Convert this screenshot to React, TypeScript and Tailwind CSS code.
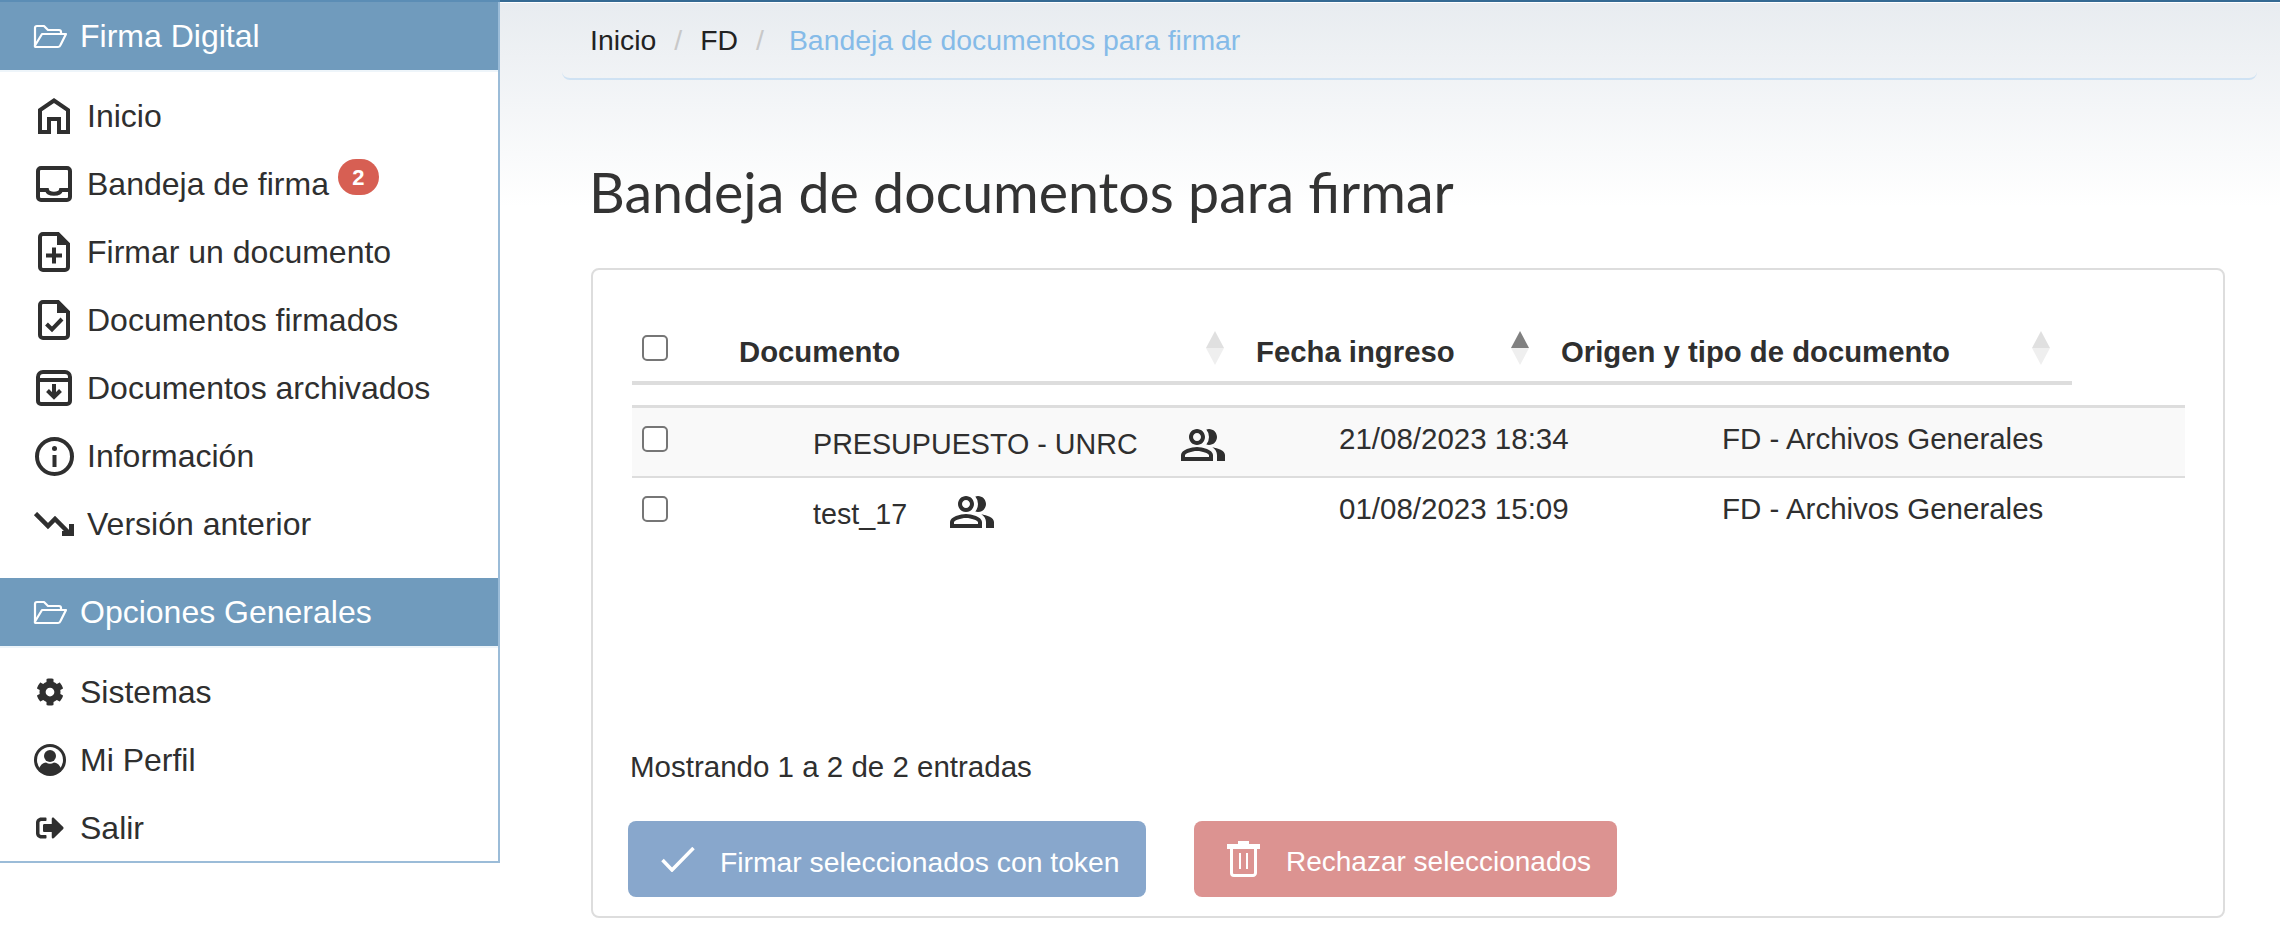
import React from "react";
import { FaCog, FaSignOutAlt } from "react-icons/fa";
import { MdOutlinePeopleAlt } from "react-icons/md";

const HomeIcon = () => (
  <svg width="32" height="36" viewBox="0 0 32 36" fill="none" stroke="currentColor" strokeWidth="4">
    <path d="M2 34V12L16 2.5 30 12V34H21V21H11V34Z" />
  </svg>
);

const InboxIcon = () => (
  <svg width="36" height="36" viewBox="0 0 36 36" fill="none" stroke="currentColor" strokeWidth="4">
    <rect x="2" y="2" width="32" height="32" rx="3" />
    <path d="M2 24H11C12 29 24 29 25 24H34" />
  </svg>
);

const FileBase = ({ children }: { children: React.ReactNode }) => (
  <svg width="32" height="40" viewBox="0 0 32 40" fill="none" stroke="currentColor" strokeWidth="4">
    <path d="M2 5a3 3 0 0 1 3-3H20L30 12V35a3 3 0 0 1-3 3H5a3 3 0 0 1-3-3Z" />
    <path d="M20 2V12H30Z" fill="currentColor" strokeWidth="2" />
    {children}
  </svg>
);

const ArchiveIcon = () => (
  <svg width="36" height="36" viewBox="0 0 36 36" fill="none" stroke="currentColor" strokeWidth="4">
    <path d="M2 10V7a5 5 0 0 1 5-5H29a5 5 0 0 1 5 5V31a3 3 0 0 1-3 3H5a3 3 0 0 1-3-3Z" />
    <path d="M2 10H34" />
    <path d="M18 14V26M11.5 20.5 18 27l6.5-6.5" />
  </svg>
);

const InfoIcon = () => (
  <svg width="39" height="39" viewBox="0 0 39 39" fill="none">
    <circle cx="19.5" cy="19.5" r="17.5" stroke="currentColor" strokeWidth="4" />
    <circle cx="19.5" cy="11.5" r="2.5" fill="currentColor" />
    <rect x="17.5" y="18" width="4" height="12" fill="currentColor" />
  </svg>
);

const TrendIcon = () => (
  <svg width="40" height="24" viewBox="0 0 40 24" fill="none" stroke="currentColor">
    <path d="M1.5 1.5 14 14l7-7L36 22" strokeWidth="4.5" />
    <path d="M28 21.5H37.5V12" strokeWidth="5" />
  </svg>
);

const FolderIcon = () => (
  <svg width="35" height="25" viewBox="0 0 35 25" fill="none" stroke="currentColor" strokeWidth="2.2" strokeLinejoin="round">
    <path d="M2 22V4a2 2 0 0 1 2-2H11l4 4H26a2 2 0 0 1 2 2V10" />
    <path d="M9 10H33L27.5 21a3 3 0 0 1-2.5 2H3a1 1 0 0 1-1-1.5Z" />
  </svg>
);

const ProfileIcon = () => (
  <svg width="32" height="32" viewBox="0 0 32 32">
    <circle cx="16" cy="16" r="16" fill="currentColor" />
    <circle cx="16" cy="16" r="13" fill="#fff" />
    <circle cx="16" cy="12" r="6" fill="currentColor" />
    <path d="M5 26Q6 19 12 18.500 16 21 20 18.500 26 19 27 26 16 35 5 26Z" fill="currentColor" />
  </svg>
);

const CheckIcon = () => (
  <svg width="34" height="25" viewBox="0 0 34 25" fill="none" stroke="currentColor" strokeWidth="3.5">
    <path d="M1.500 13 11 23 32.500 1" />
  </svg>
);

const TrashIcon = () => (
  <svg width="33" height="36" viewBox="0 0 33 36" fill="none" stroke="currentColor">
    <path d="M11 1.500H22" strokeWidth="3" />
    <path d="M0 5.500H33" strokeWidth="5" />
    <path d="M4.500 7V32a2.500 2.500 0 0 0 2.500 2.500H26a2.500 2.500 0 0 0 2.500-2.500V7" strokeWidth="3" />
    <path d="M13 12V28M20 12V28" strokeWidth="2" />
  </svg>
);

const topItems = [
  { label: "Inicio", icon: <HomeIcon /> },
  { label: "Bandeja de firma", icon: <InboxIcon />, badge: "2" },
  {
    label: "Firmar un documento",
    icon: (
      <FileBase>
        <path d="M8 23.500H24M16 15.500V31.500" />
      </FileBase>
    ),
  },
  {
    label: "Documentos firmados",
    icon: (
      <FileBase>
        <path d="M8.500 24 14 29.500 24 19" />
      </FileBase>
    ),
  },
  { label: "Documentos archivados", icon: <ArchiveIcon /> },
  { label: "Información", icon: <InfoIcon /> },
  { label: "Versión anterior", icon: <TrendIcon /> },
];

const bottomItems = [
  { label: "Sistemas", icon: <FaCog className="text-[28px]" /> },
  { label: "Mi Perfil", icon: <ProfileIcon /> },
  { label: "Salir", icon: <FaSignOutAlt className="text-[28px]" /> },
];

const rows = [
  { name: "PRESUPUESTO - UNRC", date: "21/08/2023 18:34", origin: "FD - Archivos Generales" },
  { name: "test_17", date: "01/08/2023 15:09", origin: "FD - Archivos Generales" },
];

const SortArrows = ({ active }: { active?: boolean }) => (
  <span className="flex flex-col items-center">
    <span className={`w-0 h-0 border-x-[9px] border-x-transparent border-b-[17px] ${active ? "border-b-[#808080]" : "border-b-[#e0e0e0]"}`} />
    <span className="w-0 h-0 border-x-[9px] border-x-transparent border-t-[17px] border-t-[#efefef]" />
  </span>
);

const Checkbox = () => (
  <span className="block w-[26px] h-[26px] rounded-[5px] border-2 border-[#767676] bg-white" />
);

const SectionHeader = ({ label }: { label: string }) => (
  <div className="h-[68px] bg-[#709bbd] text-white flex items-center pl-[33px] gap-[12px] text-[32px]">
    <FolderIcon />
    <span>{label}</span>
  </div>
);

const App = () => {
  return (
    <div className="w-[2280px] h-[931px] overflow-hidden bg-white text-[#2f2f2f] font-['Liberation_Sans',Arial,sans-serif]">
      <div className="h-[2px] flex">
        <div className="w-[500px] bg-[#5b8db5]" />
        <div className="flex-1 bg-[#356a93]" />
      </div>
      <div className="flex items-start">
        {/* Sidebar */}
        <div className="w-[500px] h-[861px] shrink-0 border-r-2 border-b-2 border-[#9bbcd8] bg-white">
          <SectionHeader label="Firma Digital" />
          <div className="border-t-2 border-[#eef5fa] pt-[10px] h-[508px]">
            {topItems.map((item) => (
              <div key={item.label} className="h-[68px] flex items-center pl-[34px] gap-[13px] text-[32px]">
                <span className="w-[40px] flex justify-center shrink-0">{item.icon}</span>
                <span>{item.label}</span>
                {item.badge && (
                  <span className="-ml-[4px] -mt-[14px] w-[41px] h-[36px] rounded-full bg-[#d75f53] text-white text-[22px] font-bold flex items-center justify-center">
                    {item.badge}
                  </span>
                )}
              </div>
            ))}
          </div>
          <SectionHeader label="Opciones Generales" />
          <div className="border-t-2 border-[#eef5fa] pt-[10px]">
            {bottomItems.map((item) => (
              <div key={item.label} className="h-[68px] flex items-center pl-[34px] gap-[14px] text-[32px]">
                <span className="w-[32px] flex justify-center shrink-0">{item.icon}</span>
                <span>{item.label}</span>
              </div>
            ))}
          </div>
        </div>

        {/* Main */}
        <div className="flex-1 h-[929px] border-t border-white bg-gradient-to-b from-[#e8ecf0] to-white to-[22%] pl-[62px] pr-[24px]">
          <div className="h-[77px] border-b-2 border-[#cfe2f3] rounded-b-lg flex items-center pl-[28px] text-[28.4px] text-[#222]">
            <span>Inicio</span>
            <span className="mx-[18px] text-[#c8c8c8]">/</span>
            <span>FD</span>
            <span className="ml-[18px] mr-[25px] text-[#c8c8c8]">/</span>
            <span className="text-[#85bbe8]">Bandeja de documentos para firmar</span>
          </div>

          <h1 className="ml-[27px] mt-[85px] h-[54px] leading-[54px] text-[55.500px] font-normal text-[#333] font-['Lato',sans-serif]">
            Bandeja de documentos para firmar
          </h1>

          <div className="ml-[29px] mr-[32px] mt-[49px] h-[650px] rounded-lg border-2 border-[#ddd] bg-white pl-[39px] pr-[38px] text-[29.5px]">
            {/* Table head */}
            <div className="mt-[56px] w-[1440px] h-[59px] border-b-4 border-[#ddd] flex items-center pb-[12px] font-bold text-[29.3px]">
              <span className="pl-[10px] w-[107px]"><Checkbox /></span>
              <span className="w-[467px] pt-[8px]">Documento</span>
              <span className="w-[50px] flex"><SortArrows /></span>
              <span className="w-[255px] pt-[8px]">Fecha ingreso</span>
              <span className="w-[50px] flex"><SortArrows active /></span>
              <span className="w-[471px] pt-[8px]">Origen y tipo de documento</span>
              <SortArrows />
            </div>

            {/* Rows */}
            <div className="mt-[20px] w-[1553px] border-t-[3px] border-[#ddd]">
              {rows.map((row, index) => (
                <div
                  key={row.name}
                  className={`grid grid-cols-[181px_526px_383px_1fr] h-[70px] leading-[34px] ${index === 0 ? "bg-[#f9f9f9] border-b-2 border-[#ddd]" : ""}`}
                >
                  <span className="pl-[10px] pt-[18px]"><Checkbox /></span>
                  <span className={`flex items-start pt-[19px] ${index === 0 ? "gap-[43px]" : "gap-[43px]"}`}>
                    <span className="whitespace-nowrap text-[28.700px]">{row.name}</span>
                    <MdOutlinePeopleAlt className={`text-[48px] -ml-[2px] ${index === 0 ? "-mt-[6px]" : "-mt-[9px]"}`} />
                  </span>
                  <span className="pt-[14px]">{row.date}</span>
                  <span className="pt-[14px]">{row.origin}</span>
                </div>
              ))}
            </div>

            <div className="mt-[203px] -ml-[2px] leading-[32px]">Mostrando 1 a 2 de 2 entradas</div>

            <div className="mt-[38px] -ml-[4px] flex gap-[48px] text-white text-[28.3px]">
              <button className="w-[518px] h-[76px] rounded-lg bg-[#88a7cc] flex items-center pl-[33px] gap-[25px]">
                <CheckIcon />
                <span className="pt-[6px]">Firmar seleccionados con token</span>
              </button>
              <button className="w-[423px] h-[76px] rounded-lg bg-[#dc9391] flex items-center pl-[33px] gap-[26px]">
                <TrashIcon />
                <span className="pt-[6px] text-[28px]">Rechazar seleccionados</span>
              </button>
            </div>
          </div>
        </div>
      </div>
    </div>
  );
};

export default App;
